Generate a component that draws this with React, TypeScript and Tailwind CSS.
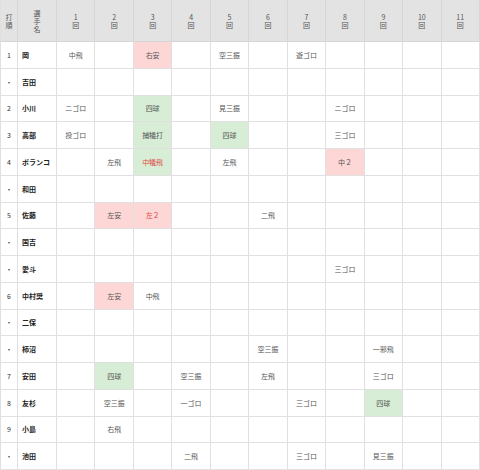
type Cell = { t: string; bg?: "hit" | "walk"; red?: boolean };

type Row = { order: string; name: string; cells: Record<number, Cell> };

const rows: Row[] = [
  { order: "1", name: "岡", cells: { 1: { t: "中飛" }, 3: { t: "右安", bg: "hit" }, 5: { t: "空三振" }, 7: { t: "遊ゴロ" } } },
  { order: "・", name: "吉田", cells: {} },
  { order: "2", name: "小川", cells: { 1: { t: "ニゴロ" }, 3: { t: "四球", bg: "walk" }, 5: { t: "見三振" }, 8: { t: "ニゴロ" } } },
  { order: "3", name: "高部", cells: { 1: { t: "投ゴロ" }, 3: { t: "捕犠打", bg: "walk" }, 5: { t: "四球", bg: "walk" }, 8: { t: "三ゴロ" } } },
  { order: "4", name: "ポランコ", cells: { 2: { t: "左飛" }, 3: { t: "中犠飛", bg: "walk", red: true }, 5: { t: "左飛" }, 8: { t: "中２", bg: "hit" } } },
  { order: "・", name: "和田", cells: {} },
  { order: "5", name: "佐藤", cells: { 2: { t: "左安", bg: "hit" }, 3: { t: "左２", bg: "hit", red: true }, 6: { t: "二飛" } } },
  { order: "・", name: "国吉", cells: {} },
  { order: "・", name: "愛斗", cells: { 8: { t: "三ゴロ" } } },
  { order: "6", name: "中村奨", cells: { 2: { t: "左安", bg: "hit" }, 3: { t: "中飛" } } },
  { order: "・", name: "二保", cells: {} },
  { order: "・", name: "柿沼", cells: { 6: { t: "空三振" }, 9: { t: "一邪飛" } } },
  { order: "7", name: "安田", cells: { 2: { t: "四球", bg: "walk" }, 4: { t: "空三振" }, 6: { t: "左飛" }, 9: { t: "三ゴロ" } } },
  { order: "8", name: "友杉", cells: { 2: { t: "空三振" }, 4: { t: "一ゴロ" }, 7: { t: "三ゴロ" }, 9: { t: "四球", bg: "walk" } } },
  { order: "9", name: "小島", cells: { 2: { t: "右飛" } } },
  { order: "・", name: "池田", cells: { 4: { t: "二飛" }, 7: { t: "三ゴロ" }, 9: { t: "見三振" } } },
];

const innings = [1, 2, 3, 4, 5, 6, 7, 8, 9, 10, 11];

const font = { fontFamily: '"Noto Sans CJK JP", "Noto Sans", sans-serif' };

const App = () => {
  return (
    <div
      className="w-[480px] h-[470px] bg-white overflow-hidden grid grid-cols-[17px_39px_repeat(11,1fr)] grid-rows-[42px_repeat(16,1fr)] border-l border-[#e0e0e0] text-[7px] leading-[8px]"
      style={font}
    >
      {/* Header */}
      <div className="bg-[#e3e3e3] border-r border-b border-[#d6d6d6] flex items-center justify-center text-[#555] text-center">
        打<br />順
      </div>
      <div className="bg-[#e3e3e3] border-r border-b border-[#d6d6d6] flex items-center justify-center text-[#555] text-center">
        選<br />手<br />名
      </div>
      {innings.map((n) => (
        <div
          key={n}
          className="bg-[#e3e3e3] border-r border-b border-[#d6d6d6] flex items-center justify-center text-[#555] text-center"
        >
          {n}<br />回
        </div>
      ))}

      {/* Body */}
      {rows.map((r, i) => (
        <div key={i} className="contents">
          <div className="border-r border-b border-[#e0e0e0] flex items-center justify-center text-[#333]">
            {r.order}
          </div>
          <div className="border-r border-b border-[#e0e0e0] flex items-center pl-[4px] font-bold text-[#222]">
            {r.name}
          </div>
          {innings.map((n) => {
            const c = r.cells[n];
            const bg = c?.bg === "hit" ? "bg-[#fdd6d6]" : c?.bg === "walk" ? "bg-[#d7edd5]" : "bg-white";
            return (
              <div
                key={n}
                className={`border-r border-b border-[#e0e0e0] flex items-center justify-center ${bg} ${c?.red ? "text-[#e04848]" : "text-[#555]"}`}
              >
                {c?.t}
              </div>
            );
          })}
        </div>
      ))}
    </div>
  );
};

export default App;
